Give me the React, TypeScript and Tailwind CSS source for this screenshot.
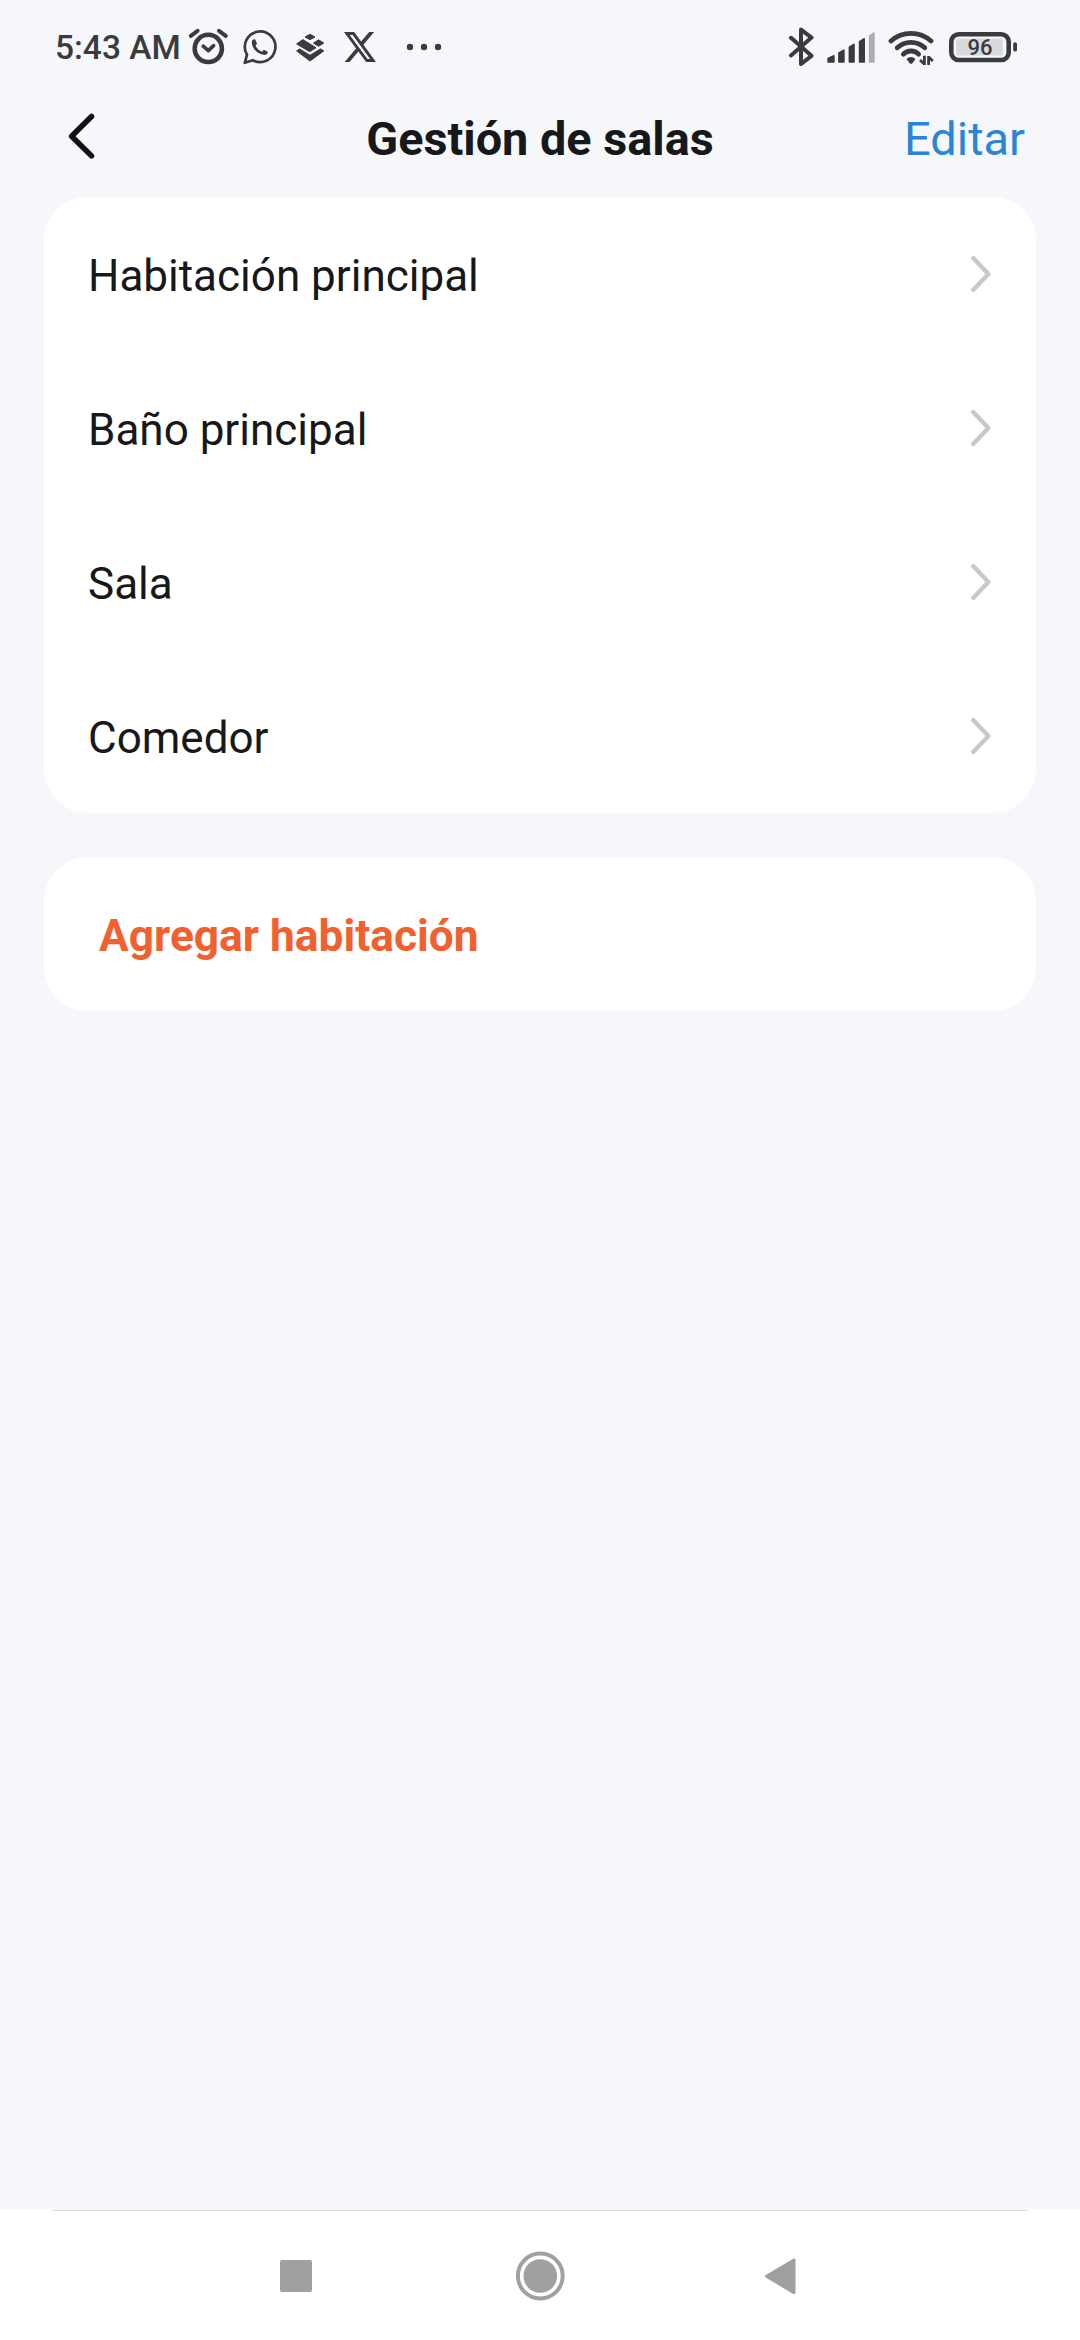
import { ReactNode } from "react";

const rooms = ["Habitación principal", "Baño principal", "Sala", "Comedor"];

interface StatusIconProps {
  width: number;
  className?: string;
  children: ReactNode;
}

// every status icon shares the same 40px high box
const StatusIcon = ({ width, className, children }: StatusIconProps) => (
  <svg
    width={width}
    height={40}
    viewBox={`0 0 ${width} 40`}
    fill="none"
    className={`shrink-0 ${className ?? ""}`}
  >
    {children}
  </svg>
);

const StatusBar = () => {
  return (
    <div className="flex h-[92px] items-center pl-[55px] pr-[62px] text-[#3a3b3e]">
      <span className="w-[133px] whitespace-nowrap pt-[4px] text-[33.5px] font-medium leading-none">
        5:43 AM
      </span>

      {/* alarm */}
      <StatusIcon width={41}>
        <g stroke="currentColor" strokeLinecap="round" strokeLinejoin="round">
          <circle cx="20.3" cy="22.4" r="13.6" strokeWidth="4.6" />
          <path d="M15.2 20.2L20.3 24.6L25.6 19.6" strokeWidth="3.6" />
          <path d="M2.8 9.8L9.6 4.8M31 4.8L37.8 9.8" strokeWidth="4" />
        </g>
      </StatusIcon>

      {/* whatsapp */}
      <StatusIcon width={34} className="ml-[14px]">
        <path
          d="M1.8 36.8L4 28.6A15.3 15.3 0 1 1 9.8 34.2Z"
          stroke="currentColor"
          strokeWidth="2.7"
          strokeLinejoin="round"
        />
        <path
          d="M8.8 16.2C8.8 14.2 10.4 13.1 12.2 13.4L14 17.6L12.6 19.7C14 22.6 16.2 24.7 19 25.8L20.8 23.7L24.8 25.7C24.8 28.2 22.6 29.2 20.4 28.8C14.4 27.8 8.8 22.2 8.8 16.2Z"
          fill="currentColor"
        />
      </StatusIcon>

      {/* stacked blocks */}
      <StatusIcon width={29} className="ml-[19px]">
        <g fill="currentColor" stroke="currentColor" strokeWidth="1" strokeLinejoin="round">
          <path d="M14 8.2L19 11L14 13.7L9 11Z" />
          <path d="M22.6 13.8L27.8 17.1L22.6 20.3L17.4 17.1Z" />
          <path d="M6.8 13.6L20 21.7L13.6 25.7L0.6 17.9Z" />
          <path d="M3.6 22.9L14 29.3L24.6 22.9L27.8 24.9L14 35L0.6 24.9Z" />
        </g>
      </StatusIcon>

      {/* x */}
      <svg
        width={32}
        height={30}
        viewBox="1.25 2.25 21.6 19.5"
        preserveAspectRatio="none"
        className="ml-[19px] mt-[2px] shrink-0"
      >
        <path
          fill="currentColor"
          d="M18.244 2.25h3.308l-7.227 8.26 8.502 11.24H16.17l-5.214-6.817L4.99 21.75H1.68l7.73-8.835L1.254 2.25H8.08l4.713 6.231zm-1.161 17.52h1.833L7.084 4.126H5.117z"
        />
      </svg>

      {/* more */}
      <StatusIcon width={36} className="ml-[30px]">
        <g fill="currentColor">
          <circle cx="4" cy="21" r="3.2" />
          <circle cx="18" cy="21" r="3.2" />
          <circle cx="32" cy="21" r="3.2" />
        </g>
      </StatusIcon>

      {/* bluetooth */}
      <StatusIcon width={26} className="ml-auto">
        <path
          d="M3 11.8L23.5 29.8L13 38V3.6L23.5 11.6L3 29.4"
          stroke="currentColor"
          strokeWidth="4"
          strokeLinecap="round"
          strokeLinejoin="round"
        />
      </StatusIcon>

      {/* signal */}
      <StatusIcon width={49} className="ml-[13px]">
        <g fill="currentColor" stroke="currentColor" strokeWidth="1.6" strokeLinejoin="round">
          <path d="M1.1 32.5L6.9 29.8V35.9H1.1Z" />
          <path d="M11.9 27L16.9 24.2V35.9H11.9Z" />
          <path d="M22.4 21.2L27 18.4V35.9H22.4Z" />
          <path d="M32.6 15.6L37.2 12.8V35.9H32.6Z" />
          <path d="M42.6 9.8L46.9 7V35.9H42.6Z" fill="#adaeb1" stroke="#adaeb1" />
        </g>
      </StatusIcon>

      {/* wifi */}
      <StatusIcon width={47} className="ml-[12px]">
        <g stroke="currentColor" strokeWidth="4.8" strokeLinecap="round">
          <path d="M3 15A30 30 0 0 1 43 15" />
          <path d="M9.2 21.8A20 20 0 0 1 36.8 21.8" />
          <path d="M15.4 28.2A10.6 10.6 0 0 1 30.6 28.2" />
        </g>
        <path
          d="M18.6 33.2C20.8 30.4 25.2 30.4 27.4 33.2L24.4 37.2C23.7 38.1 22.3 38.1 21.6 37.2Z"
          fill="currentColor"
        />
        <g stroke="currentColor" strokeWidth="2.8">
          <path d="M36.4 29.8V39M32 34L36.6 38.2" />
          <path d="M40.6 39V30M40.4 30.8L44.8 35" />
        </g>
      </StatusIcon>

      {/* battery */}
      <StatusIcon width={69} className="ml-[14px]">
        <rect x="2.3" y="8.3" width="57.4" height="25.7" rx="7.5" stroke="currentColor" strokeWidth="4.6" />
        <rect x="7" y="12.4" width="46.8" height="17" rx="1.5" fill="#d9dadd" />
        <rect x="64.2" y="16.2" width="3.8" height="9.4" rx="1.9" fill="currentColor" />
        <text x="31" y="29.3" textAnchor="middle" fontSize="22" fontWeight="500" fill="currentColor">
          96
        </text>
      </StatusIcon>
    </div>
  );
};

const Header = () => {
  return (
    <div className="flex h-[105px] items-center px-[55px] pb-[13px]">
      <div className="flex-1">
        <svg width="29" height="48" viewBox="0 0 29 48" fill="none" className="-mt-[4px] ml-[12px]">
          <path
            d="M24.5 4.5L4.6 24.2L24.5 43.9"
            stroke="#111214"
            strokeWidth="5.5"
            strokeLinecap="round"
            strokeLinejoin="round"
          />
        </svg>
      </div>
      <h1 className="whitespace-nowrap pt-[3px] text-[46.8px] font-bold leading-none text-[#17181a]">
        Gestión de salas
      </h1>
      <button className="flex-1 text-right text-[47px] leading-none text-[#2c85d3]">Editar</button>
    </div>
  );
};

const RoomRow = ({ name }: { name: string }) => {
  return (
    <div className="flex h-[154px] items-center justify-between px-[44px]">
      <span className="pt-[4px] text-[44px] leading-none text-[#17181a]">{name}</span>
      <svg width="23" height="40" viewBox="0 0 23 40" fill="none">
        <path d="M3 2.8L19.4 20L3 37.2" stroke="#c8c8c8" strokeWidth="4.3" strokeLinejoin="round" />
      </svg>
    </div>
  );
};

const NavigationBar = () => {
  return (
    <div className="h-[131px] bg-white">
      <div className="mx-[52px] h-[2px] border-b border-[#dcdcdc] bg-[#f5f7fb]" />
      <div className="flex h-[129px] items-center pl-[280px] text-[#a0a0a0]">
        <div className="h-[32px] w-[32px] rounded-[2px] bg-[#a0a0a0]" />
        <svg width="50" height="50" viewBox="0 0 50 50" className="ml-[203px]">
          <circle cx="25.3" cy="25" r="22.4" fill="none" stroke="currentColor" strokeWidth="4" />
          <circle cx="25.3" cy="25" r="16.8" fill="currentColor" />
        </svg>
        <svg width="33" height="40" viewBox="0 0 33 40" className="ml-[199px]">
          <path
            d="M2.5 20.3L30 4V36.6Z"
            fill="currentColor"
            stroke="currentColor"
            strokeWidth="3"
            strokeLinejoin="round"
          />
        </svg>
      </div>
    </div>
  );
};

const App = () => {
  return (
    <div className="flex h-[2340px] w-[1080px] flex-col bg-[#f5f7fb] font-[Roboto,sans-serif]">
      <StatusBar />
      <Header />
      <div className="flex flex-1 flex-col gap-[44px] px-[44px]">
        <div className="rounded-[44px] bg-white">
          {rooms.map((room) => (
            <RoomRow key={room} name={room} />
          ))}
        </div>
        <button className="flex h-[154px] items-center rounded-[44px] bg-white pl-[55px] pt-[4px] text-[44.3px] font-bold leading-none text-[#f1602f]">
          Agregar habitación
        </button>
      </div>
      <NavigationBar />
    </div>
  );
};

export default App;
